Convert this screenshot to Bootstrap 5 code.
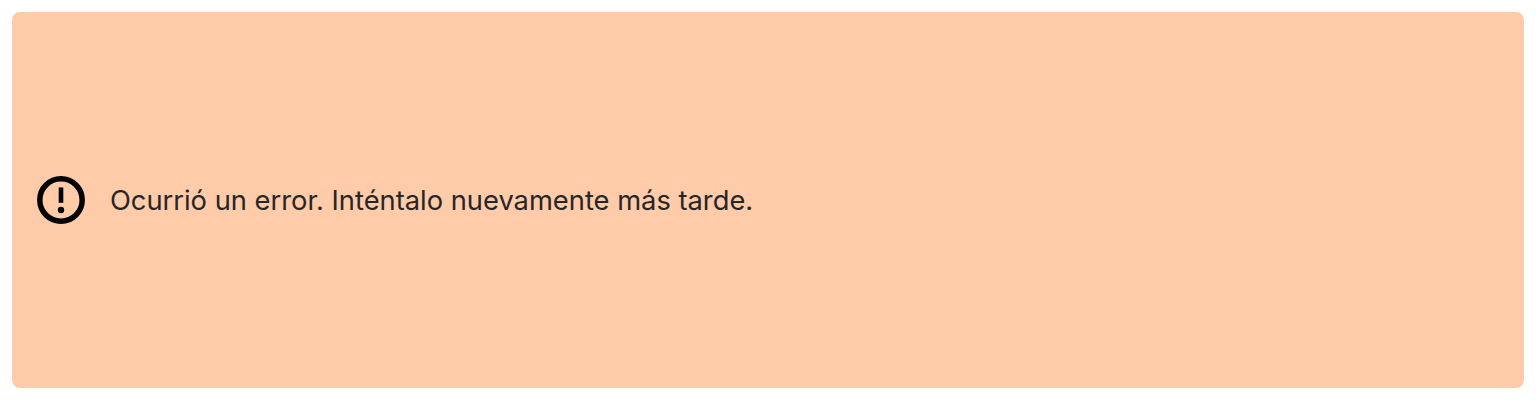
<!DOCTYPE html>
<html lang="es">
<head>
<meta charset="utf-8">
<meta name="viewport" content="width=device-width, initial-scale=1">
<title>Error</title>
<link href="https://cdn.jsdelivr.net/npm/bootstrap@5.3.0/dist/css/bootstrap.min.css" rel="stylesheet">
<style>
body { height: 400px; padding: 12px; background: #fff; overflow: hidden; }
.error-alert { --bs-alert-bg: #ffcba9; --bs-alert-color: #262626; --bs-alert-border-radius: 8px; --bs-alert-padding-x: 24px; height: 376px; gap: 24px; }
.error-text { font: 370 27.3px/36px Inter, sans-serif; padding-top: 2px; white-space: nowrap; }
</style>
</head>
<body>
<div class="alert error-alert border-0 d-flex align-items-center m-0 py-0" role="alert">
  <svg class="flex-shrink-0" width="50" height="50" viewBox="0 0 50 50" aria-hidden="true">
    <circle cx="25" cy="25" r="21.2" fill="none" stroke="#000" stroke-width="5.5"/>
    <path d="M22.7 12.4h4.6v15.4h-4.6z"/>
    <circle cx="25" cy="35" r="3.2"/>
  </svg>
  <span class="error-text">Ocurrió un error. Inténtalo nuevamente más tarde.</span>
</div>
<script src="https://cdn.jsdelivr.net/npm/bootstrap@5.3.0/dist/js/bootstrap.bundle.min.js"></script>
</body>
</html>
